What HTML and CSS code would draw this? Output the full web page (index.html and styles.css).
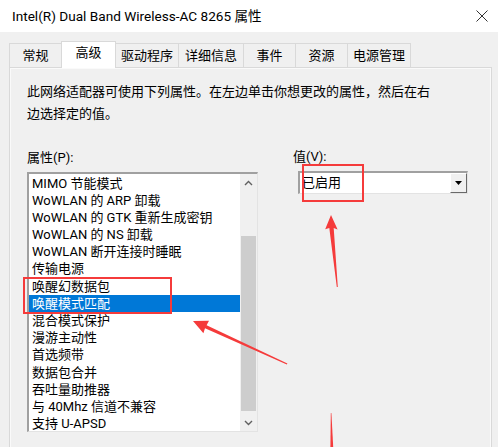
FILE: index.html
```html
<!DOCTYPE html>
<html lang="zh-CN">
<head>
    <meta charset="UTF-8">
    <meta name="viewport" content="width=device-width, initial-scale=1.0">
    <title>属性</title>
    <link rel="stylesheet" href="styles.css">
</head>
<body>
    <div class="window">
        <div class="titlebar">
            <span class="title">Intel(R) Dual Band Wireless-AC 8265 属性</span>
            <svg class="close" width="12" height="12" viewBox="0 0 12 12">
                <path d="M0.5 0.5 L11.5 11.5 M11.5 0.5 L0.5 11.5" stroke="#333" stroke-width="1" fill="none"/>
            </svg>
        </div>
        <div class="dialog">
            <div class="tabs">
                <div class="tab w52">常规</div>
                <div class="tab active w55">高级</div>
                <div class="tab w62">驱动程序</div>
                <div class="tab w65">详细信息</div>
                <div class="tab w52">事件</div>
                <div class="tab w52">资源</div>
                <div class="tab w64">电源管理</div>
            </div>
            <div class="panel">
                <p class="desc">此网络适配器可使用下列属性。在左边单击你想更改的属性，然后在右<br>边选择定的值。</p>
                <div class="columns">
                    <div class="col-left">
                        <div class="label">属性(P):</div>
                        <div class="listbox">
                            <ul class="items">
                                <li>MIMO 节能模式</li>
                                <li>WoWLAN 的 ARP 卸载</li>
                                <li>WoWLAN 的 GTK 重新生成密钥</li>
                                <li>WoWLAN 的 NS 卸载</li>
                                <li>WoWLAN 断开连接时睡眠</li>
                                <li>传输电源</li>
                                <li>唤醒幻数据包</li>
                                <li class="selected">唤醒模式匹配</li>
                                <li>混合模式保护</li>
                                <li>漫游主动性</li>
                                <li>首选频带</li>
                                <li>数据包合并</li>
                                <li>吞吐量助推器</li>
                                <li>与 40Mhz 信道不兼容</li>
                                <li>支持 U-APSD</li>
                            </ul>
                            <div class="scrollbar">
                                <div class="sb-btn">
                                    <svg width="9" height="6" viewBox="0 0 9 6"><path d="M1 5 L4.5 1.5 L8 5" stroke="#606060" stroke-width="1.4" fill="none"/></svg>
                                </div>
                                <div class="sb-track"><div class="sb-thumb"></div></div>
                                <div class="sb-btn">
                                    <svg width="9" height="6" viewBox="0 0 9 6"><path d="M1 1 L4.5 4.5 L8 1" stroke="#606060" stroke-width="1.4" fill="none"/></svg>
                                </div>
                            </div>
                        </div>
                    </div>
                    <div class="col-right">
                        <div class="label">值(V):</div>
                        <div class="combo">
                            <span class="combo-text">已启用</span>
                            <div class="combo-btn">
                                <svg width="7" height="4" viewBox="0 0 7 4"><path d="M0 0 L7 0 L3.5 4 Z" fill="#000"/></svg>
                            </div>
                        </div>
                    </div>
                </div>
            </div>
        </div>
    </div>

    <!-- annotations drawn over the screenshot -->
    <div class="mark mark-list"></div>
    <div class="mark mark-value"></div>
    <svg class="arrows" width="500" height="447" viewBox="0 0 500 447">
        <polygon points="331,215 337.6,229.5 333.7,228 337.8,287 336.8,287 329.3,228 325.2,229.2" fill="#f53b3b"/>
        <polygon points="193,321 209,320.8 206.6,325.3 287.4,363.6 286.8,364.4 205,328.3 203.4,333.2" fill="#f53b3b"/>
        <polygon points="330.8,413 331.4,413 333.2,447 330.4,447" fill="#f53b3b"/>
    </svg>
</body>
</html>
```

FILE: styles.css
```css
body {
    margin: 0;
    background: #fff;
    font-family: Roboto, "Noto Sans CJK SC", sans-serif;
    font-size: 13px;
    color: #000;
    overflow: hidden;
}
.window {
    width: 498px;
    height: 447px;
    position: relative;
}
.titlebar {
    height: 32px;
    background: #fff;
    display: flex;
    align-items: center;
    justify-content: space-between;
    padding: 0 10px 0 12px;
    box-sizing: border-box;
}
.title {
    font-size: 13.6px;
    line-height: 16px;
    margin-top: -1px;
}
.close {
    margin-top: -1px;
}
.dialog {
    background: #f0f0f0;
    height: 415px;
    padding: 9px 0 0 9px;
    box-sizing: border-box;
}
.tabs {
    display: flex;
    align-items: flex-end;
    height: 26px;
    position: relative;
    z-index: 1;
}
.tab {
    height: 24px;
    line-height: 24px;
    box-sizing: border-box;
    border: 1px solid #d9d9d9;
    border-bottom: none;
    border-right: none;
    text-align: center;
    background: #f0f0f0;
}
.tab.w64 {
    border-right: 1px solid #d9d9d9;
}
.tab.active {
    height: 27px;
    line-height: 22px;
    background: #fff;
    border-right: 1px solid #d9d9d9;
    margin-bottom: -1px;
}
.tab.active + .tab {
    border-left: none;
}
.w52 { width: 52px; }
.w55 { width: 55px; }
.w62 { width: 62px; }
.w65 { width: 65px; }
.w64 { width: 64px; }
.panel {
    width: 483px;
    height: 400px;
    box-sizing: border-box;
    border: 1px solid #d9d9d9;
    box-shadow: inset 0 0 0 1px #fafafa;
    background: #f0f0f0;
    padding: 13px 0 0 17px;
}
.desc {
    margin: 0;
    line-height: 22px;
}
.columns {
    display: flex;
    margin-top: 22px;
}
.col-left {
    width: 231px;
}
.col-right {
    margin-left: 40px;
}
.label {
    line-height: 22px;
    margin-bottom: 3px;
}
.listbox {
    height: 260px;
    box-sizing: border-box;
    border-top: 2px solid #a0a0a0;
    border-left: 2px solid #a0a0a0;
    border-right: 1px solid #e3e3e3;
    border-bottom: 1px solid #e3e3e3;
    background: #fff;
    display: flex;
}
.items {
    list-style: none;
    margin: 0;
    padding: 0.5px 0 0 0;
    flex: 1;
}
.items li {
    height: 17.2px;
    line-height: 17.2px;
    padding-left: 3px;
    white-space: nowrap;
    overflow: hidden;
}
.items li.selected {
    background: #0078d7;
    color: #fff;
}
.scrollbar {
    width: 17px;
    background: #f0f0f0;
    display: flex;
    flex-direction: column;
}
.sb-btn {
    height: 17px;
    display: flex;
    align-items: center;
    justify-content: center;
}
.sb-track {
    flex: 1;
    padding-top: 45px;
    box-sizing: border-box;
}
.sb-thumb {
    height: 175px;
    margin: 0 1px;
    background: #cdcdcd;
}
.col-right .label {
    margin-left: -5px;
    margin-top: -1px;
}
.combo {
    width: 170px;
    height: 23px;
    box-sizing: border-box;
    border-top: 2px solid #a0a0a0;
    border-left: 2px solid #a0a0a0;
    border-right: 1px solid #e3e3e3;
    border-bottom: 1px solid #e3e3e3;
    background: #fff;
    display: flex;
    align-items: center;
    margin-top: 1px;
}
.combo-text {
    flex: 1;
    padding-left: 2px;
    line-height: 18px;
}
.combo-btn {
    width: 17px;
    height: 20px;
    box-sizing: border-box;
    background: #f0f0f0;
    border-top: 1px solid #fff;
    border-left: 1px solid #fff;
    border-right: 1px solid #696969;
    border-bottom: 1px solid #696969;
    display: flex;
    align-items: center;
    justify-content: center;
}
.mark {
    position: absolute;
    border: 2px solid #f53b3b;
    box-sizing: border-box;
}
.mark-list {
    left: 23px;
    top: 277px;
    width: 149px;
    height: 37px;
}
.mark-value {
    left: 302px;
    top: 164px;
    width: 62px;
    height: 38px;
}
.arrows {
    position: absolute;
    left: 0;
    top: 0;
}
```
